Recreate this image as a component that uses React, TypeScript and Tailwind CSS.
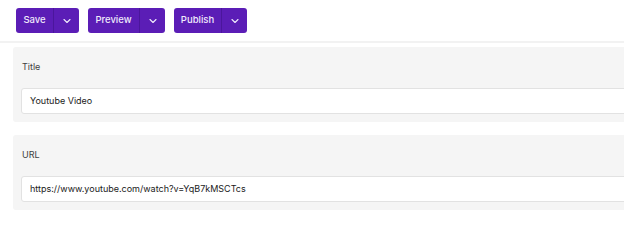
import { ChevronDown } from "lucide-react"

function SplitButton({ label, mainW }: { label: string; mainW: string }) {
  return (
    <div className="flex h-[25px] rounded-[3px] bg-[#5b1db6] text-[#efe9fb] overflow-hidden">
      <button className={`${mainW} flex items-center justify-center text-[9.5px] font-medium border-r border-[#4b169c]`}>
        {label}
      </button>
      <button className="w-[25px] flex items-center justify-center">
        <ChevronDown size={12} strokeWidth={2.25} />
      </button>
    </div>
  )
}

function Field({ label, value }: { label: string; value: string }) {
  return (
    <div className="bg-[#f5f5f5] rounded-l-[3px] pl-[8px] pt-[12px] pb-[8px]">
      <div className="h-[15px] flex items-center text-[9px] text-[#3f3f3f] pl-[1px]">{label}</div>
      <div className="mt-[14px] h-[26px] bg-white border border-[#e2e2e2] rounded-l-[3px] flex items-center pl-[8px] text-[9px] text-[#1a1a1a]">
        {value}
      </div>
    </div>
  )
}

export default function App() {
  return (
    <div className="w-[624px] h-[217px] overflow-hidden bg-white" style={{ fontFamily: "Inter, 'Noto Sans', sans-serif" }}>
      {/* Toolbar */}
      <div className="flex gap-[9px] pl-[16px] pt-[8px] pb-[8px] border-b-[2px] border-[#f2f2f2]">
        <SplitButton label="Save" mainW="w-[38px]" />
        <SplitButton label="Preview" mainW="w-[52px]" />
        <SplitButton label="Publish" mainW="w-[48px]" />
      </div>

      {/* Fields */}
      <div className="w-[680px] pl-[13px] pt-[4px] flex flex-col gap-[13px]">
        <Field label="Title" value="Youtube Video" />
        <Field label="URL" value="https://www.youtube.com/watch?v=YqB7kMSCTcs" />
      </div>
    </div>
  )
}
